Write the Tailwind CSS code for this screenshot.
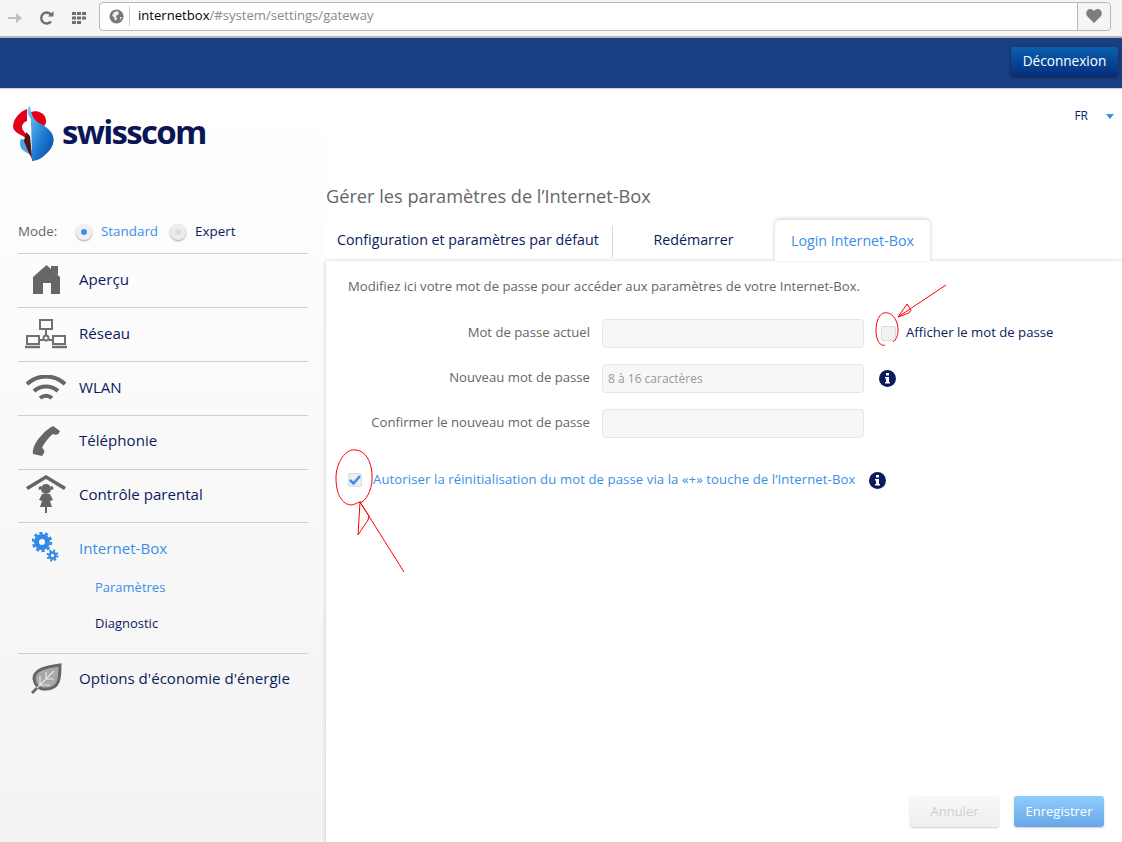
<!DOCTYPE html>
<html lang="fr">
<head>
    <meta charset="UTF-8">
    <meta name="viewport" content="width=device-width, initial-scale=1.0">
    <title>Internet-Box</title>
    <script src="https://cdn.jsdelivr.net/npm/@tailwindcss/browser@4"></script>
</head>
<body class="relative w-[1122px] h-[842px] overflow-hidden bg-white font-['Open_Sans','Noto_Sans',sans-serif] text-[#0b1a5c]">

    <!-- browser toolbar -->
    <div class="h-[38px] bg-[#f5f5f5] border-b-2 border-[#b5b5b5] flex items-center">
        <div class="w-[99px] flex items-center shrink-0 pl-[8px] gap-[18px]">
            <svg width="14" height="12" viewBox="0 0 14 12"><path d="M0 5h8V1l6 5-6 5V7H0z" fill="#c0c0c0"/></svg>
            <svg width="14" height="14" viewBox="0 0 14 14"><path d="M11 10.5A5.5 5.5 0 1 1 11 3.5" fill="none" stroke="#6e6e6e" stroke-width="2.4"/><path d="M8 5.5h5.5V0z" fill="#6e6e6e"/></svg>
            <svg width="14" height="12" viewBox="0 0 14 12" fill="#6e6e6e"><rect width="4" height="3"/><rect x="5" width="4" height="3"/><rect x="10" width="4" height="3"/><rect y="4.5" width="4" height="3"/><rect x="5" y="4.5" width="4" height="3"/><rect x="10" y="4.5" width="4" height="3"/><rect y="9" width="4" height="3"/><rect x="5" y="9" width="4" height="3"/></svg>
        </div>
        <div class="w-[1012px] h-[29px] mt-[-4px] bg-white border border-[#b8b8b8] rounded-[4px] flex items-center">
            <div class="w-[30px] h-[20px] border-r border-[#cfcfcf] flex items-center pl-[9px] shrink-0">
                <svg width="15" height="15" viewBox="0 0 15 15"><circle cx="7.5" cy="7.5" r="7" fill="#777"/><path d="M5 3l4-1 1 3-3 2 1 3-2 2-1-4-2-1zM11 8l2 0-2 3z" fill="#eee"/></svg>
            </div>
            <div class="pl-[8px] flex-1 text-[13.1px] text-[#8a8a8a]"><span class="text-black">internetbox</span>/#system/settings/gateway</div>
            <div class="w-[33px] h-full bg-[#f5f5f5] border-l border-[#b8b8b8] rounded-r-[4px] flex items-center justify-center">
                <svg width="16" height="14" viewBox="0 0 16 14"><path d="M8 14L1 7C-1 4 1 0 4.300 0 6 0 7.300 1 8 2 8.700 1 10 0 11.700 0 15 0 17 4 15 7z" fill="#7d7d7d"/></svg>
            </div>
        </div>
    </div>

    <!-- top band -->
    <div class="h-[51px] bg-[#1a3e82] border-b border-[#d0d0d0] flex items-center justify-end pr-[4px]">
        <button class="w-[107px] h-[29px] mt-[-3px] rounded-[3px] bg-linear-to-b from-[#0a60ae] to-[#062f7e] text-white text-[13.6px] shadow-[0_1px_3px_rgba(0,0,0,0.5)]">Déconnexion</button>
    </div>

    <div class="flex h-[753px]">
        <!-- sidebar -->
        <aside class="w-[326px] shrink-0 bg-linear-to-b from-white to-[#f3f3f3]">
            <div class="h-[128px] flex items-start pl-[13px] pt-[17px] gap-[7px]">
                <svg width="42" height="56" viewBox="0 0 42 56" class="shrink-0">
                    <defs>
                        <linearGradient id="swissBlue" x1="0" y1="0" x2="1" y2="1"><stop offset="0" stop-color="#7fd0f5"/><stop offset="0.55" stop-color="#1f7fd6"/><stop offset="1" stop-color="#0b3f9c"/></linearGradient>
                    </defs>
                    <path d="M14 3C8 5 1 11 0 20c0 4 3 6 6 8l11 6-3-4-4-6c-2-3-1-7 4-9z" fill="#e3001b"/>
                    <path d="M18 6c5-2 14 0 15 8 1 5-4 9-9 8l-6-2z" fill="#e3001b"/>
                    <path d="M17 0c-4 3-3 8 1 13l1 42c4 0 9-2 14-7 6-5 9-12 7-18-1-5-8-10-14-13-5-3-8-8-9-17z" fill="url(#swissBlue)"/>
                    <path d="M8 33c-2 4-1 10 3 12l8 5-2-16z" fill="#4aa5e4"/>
                    <path d="M13 26l4 4 2 23-4-8-4-10z" fill="#5a1010"/>
                </svg>
                <div class="text-[33px] leading-[44px] font-bold tracking-[-1.7px] mt-[4px] text-[#0a1656]">swisscom</div>
            </div>
            <div class="h-[37px] mx-[18px] pb-[7px] flex items-center text-[13.4px] border-b border-[#cfcfcf]">
                <span class="w-[58px] text-[#666]">Mode:</span>
                <span class="w-[16px] h-[16px] rounded-full bg-[#f0f0f0] shadow-[0_1px_2px_rgba(0,0,0,0.35)] flex items-center justify-center"><span class="w-[6px] h-[6px] rounded-full bg-[#3b8fe8]"></span></span>
                <span class="ml-[9px] w-[69px] text-[#3b8fe8]">Standard</span>
                <span class="w-[16px] h-[16px] rounded-full bg-[#ececec] shadow-[0_1px_2px_rgba(0,0,0,0.35)] flex items-center justify-center"><span class="w-[6px] h-[6px] rounded-full bg-[#dcdcdc]"></span></span>
                <span class="ml-[9px]">Expert</span>
            </div>
            <nav class="mx-[18px] text-[15.1px] font-medium">
                <a class="h-[54px] pb-[2px] flex items-center border-b border-[#cfcfcf]">
                    <span class="w-[61px] flex justify-center pr-[5px]">
                        <svg width="27" height="29" viewBox="0 0 27 29" fill="#666"><path d="M13.500 0L27 12V29H18V18H10V29H0V12L13.500 0zM18 1h7v9l-7-6z"/></svg>
                    </span>Aperçu
                </a>
                <a class="h-[54px] pb-[2px] flex items-center border-b border-[#cfcfcf]">
                    <span class="w-[61px] flex justify-center pr-[5px]">
                        <svg width="42" height="30" viewBox="0 0 42 30" fill="none" stroke="#707070" stroke-width="2"><rect x="15" y="1" width="12" height="9"/><rect x="2" y="17" width="12" height="8"/><rect x="28" y="17" width="12" height="8"/><path d="M21 10v6M14 21h4M24 21h4"/><circle cx="21" cy="19" r="2.500"/><path d="M0 28h15M27 28h15" stroke-width="2.500"/></svg>
                    </span>Réseau
                </a>
                <a class="h-[54px] pb-[2px] flex items-center border-b border-[#cfcfcf]">
                    <span class="w-[61px] flex justify-center pr-[5px]">
                        <svg width="40" height="26" viewBox="0 0 40 26" fill="none" stroke="#666" stroke-width="4"><path d="M1 9C12-1 28-1 39 9"/><path d="M8 16C15 10 25 10 32 16"/><path d="M14 23C18 20 22 20 26 23"/></svg>
                    </span>WLAN
                </a>
                <a class="h-[54px] pb-[4px] flex items-center border-b border-[#cfcfcf]">
                    <span class="w-[61px] flex justify-center pr-[5px]">
                        <svg width="30" height="30" viewBox="0 0 30 30" fill="#666"><path d="M22 0l7 5-1 2c-1 2-4 2-6 1-3 2-9 9-11 14 2 1 3 3 2 5l-2 3-9-2C1 24 4 16 10 10 14 5 18 2 22 0z"/></svg>
                    </span>Téléphonie
                </a>
                <a class="h-[53px] pb-[4px] flex items-center border-b border-[#cfcfcf]">
                    <span class="w-[61px] flex justify-center pr-[5px]">
                        <svg width="40" height="38" viewBox="0 0 40 38" fill="#666"><path d="M0 12L20 0l20 12-2 3L20 4 2 15z"/><circle cx="20" cy="14" r="5"/><path d="M15 11c-2 0-3 2-2 4l3-1zM25 11c2 0 3 2 2 4l-3-1z"/><path d="M16 19h8l3 6-3 1 2 6h-5v6h-2v-6h-5l2-6-3-1z"/></svg>
                    </span>Contrôle parental
                </a>
                <div class="h-[131px] border-b border-[#cfcfcf]">
                    <a class="h-[53px] pb-[2px] flex items-center text-[#3b8fe8]">
                        <span class="w-[61px] flex justify-center pr-[5px] mt-[-3px]">
                            <svg width="28" height="30" viewBox="0 0 28 30"><circle cx="10" cy="10" r="5.500" fill="none" stroke="#2f8be6" stroke-width="5"/><circle cx="10" cy="10" r="9" fill="none" stroke="#2f8be6" stroke-width="2.500" stroke-dasharray="3.200 2.450"/><circle cx="20.500" cy="23.500" r="3" fill="none" stroke="#2f8be6" stroke-width="2.500"/><circle cx="20.500" cy="23.500" r="5" fill="none" stroke="#2f8be6" stroke-width="2" stroke-dasharray="2 1.930"/></svg>
                        </span>Internet-Box
                    </a>
                    <div class="pl-[77px] text-[13px]">
                        <a class="block h-[36px] leading-[23px] text-[#3b8fe8]">Paramètres</a>
                        <a class="block h-[36px] leading-[23px]">Diagnostic</a>
                    </div>
                </div>
                <a class="h-[51px] pb-[2px] flex items-center">
                    <span class="w-[61px] flex justify-center pr-[5px]">
                        <svg width="32" height="32" viewBox="0 0 32 32"><path d="M30 2C30 14 30 26 16 26 9 27 5 22 4 16 4 7 14 4 30 2z" fill="#a8a8a8" stroke="#666" stroke-width="3"/><path d="M2 30L24 8M10 22V13M16 16V9M16 16h8M10 22h10" stroke="#e8e8e8" stroke-width="1.200" fill="none"/><path d="M1 29l5-5 2 2-5 5z" fill="#666"/></svg>
                    </span>Options d'économie d'énergie
                </a>
            </nav>
        </aside>

        <!-- main -->
        <main class="flex-1 flex flex-col">
            <div class="h-[131px]">
                <div class="h-[54px] flex items-center justify-end pr-[8px] text-[12px] font-medium">
                    FR
                    <svg class="ml-[18px]" width="8" height="5" viewBox="0 0 8 5"><path d="M0 0h8L4 5z" fill="#3b8fe8"/></svg>
                </div>
                <h1 class="mt-[40px] text-[18.2px] leading-[26px] text-[#666] font-normal">Gérer les paramètres de l’Internet-Box</h1>
            </div>
            <div class="h-[41px] flex items-end text-[14.25px] font-medium">
                <div class="pl-[11px] w-[287px] h-[32px] leading-[28px] border-r border-[#d8d8d8] mb-[3px] shrink-0">Configuration et paramètres par défaut</div>
                <div class="w-[161px] text-center h-[32px] leading-[28px] mb-[3px] shrink-0">Redémarrer</div>
                <div class="ml-[1px] w-[155px] h-[41px] leading-[41px] text-center text-[#3b8fe8] bg-white rounded-t-[5px] shadow-[0_-1px_4px_rgba(0,0,0,0.2)] relative z-10">Login Internet-Box</div>
            </div>
            <section class="flex-1 bg-white shadow-[0_0_4px_rgba(0,0,0,0.2)] relative flex flex-col text-[13.15px]">
                <p class="pl-[22px] pt-[16px] leading-[18px] text-[#666]">Modifiez ici votre mot de passe pour accéder aux paramètres de votre Internet-Box.</p>
                <div class="mt-[23px] flex items-center h-[30px]">
                    <label class="w-[264px] text-right text-[#666]">Mot de passe actuel</label>
                    <div class="ml-[12px] w-[262px] h-[29px] bg-[#f7f7f7] border border-[#e6e6e6] rounded-[4px]"></div>
                    <span class="ml-[17px] w-[15px] h-[15px] bg-[#f2f2f2] border border-[#dcdcdc] rounded-[2px]"></span>
                    <span class="ml-[10px] font-medium">Afficher le mot de passe</span>
                </div>
                <div class="mt-[15px] flex items-center h-[30px]">
                    <label class="w-[264px] text-right text-[#666]">Nouveau mot de passe</label>
                    <div class="ml-[12px] w-[262px] h-[29px] bg-[#f7f7f7] border border-[#e6e6e6] rounded-[4px] pl-[5px] leading-[27px] text-[12px] text-[#999]">8 à 16 caractères</div>
                    <svg class="ml-[15px]" width="17" height="17" viewBox="0 0 17 17"><circle cx="8.500" cy="8.500" r="8.500" fill="#0b1a5c"/><rect x="7" y="3" width="3" height="2.500" fill="#fff"/><path d="M6 7h4v5h1v1.500H6V12h1V8.500H6z" fill="#fff"/></svg>
                </div>
                <div class="mt-[15px] flex items-center h-[30px]">
                    <label class="w-[264px] text-right text-[#666]">Confirmer le nouveau mot de passe</label>
                    <div class="ml-[12px] w-[262px] h-[29px] bg-[#f7f7f7] border border-[#e6e6e6] rounded-[4px]"></div>
                </div>
                <div class="mt-[27px] pl-[22px] flex items-center h-[30px]">
                    <span class="w-[14px] h-[14px] bg-[#eeeeee] border border-[#dcdcdc] rounded-[2px] flex items-center justify-center shrink-0">
                        <svg width="12" height="10" viewBox="0 0 12 10"><path d="M1 5l3.500 3.500L11 1" fill="none" stroke="#3b8fe8" stroke-width="2.500"/></svg>
                    </span>
                    <span class="ml-[11px] text-[#3b8fe8] w-[487px] shrink-0 whitespace-nowrap tracking-[0.09px]">Autoriser la réinitialisation du mot de passe via la «+» touche de l’Internet-Box</span>
                    <svg class="ml-[9px]" width="17" height="17" viewBox="0 0 17 17"><circle cx="8.500" cy="8.500" r="8.500" fill="#0b1a5c"/><rect x="7" y="3" width="3" height="2.500" fill="#fff"/><path d="M6 7h4v5h1v1.500H6V12h1V8.500H6z" fill="#fff"/></svg>
                </div>
                <div class="mt-auto flex justify-end gap-[15px] pr-[18px] pb-[15px] text-[13px]">
                    <button class="w-[89px] h-[31px] rounded-[3px] bg-linear-to-b from-[#f8f8f8] to-[#eeeeee] text-[#cfcfcf] shadow-[0_1px_2px_rgba(0,0,0,0.2)]">Annuler</button>
                    <button class="w-[90px] h-[31px] rounded-[3px] bg-linear-to-b from-[#8fcdfb] to-[#69a6e8] text-white shadow-[0_1px_2px_rgba(0,0,0,0.2)]">Enregistrer</button>
                </div>
            </section>
        </main>
    </div>

    <!-- red marks drawn on the screenshot -->
    <svg class="absolute inset-0 pointer-events-none" width="1122" height="842" viewBox="0 0 1122 842" fill="none" stroke="#f00" stroke-width="1">
        <path d="M356 450C346 448 336 462 336 478 336 494 342 505 352 505 356 504 360 501 362 502 368 498 373 487 372 474 371 460 365 451 356 450z"/>
        <path d="M360 502L358 535 368 520 369 516 360 502L404 572"/>
        <path d="M888 313C880 311 876 320 876 331 876 341 881 347 885 345M888 313C893 314 898 321 898 330 898 336 896 340 893 342"/>
        <path d="M898 317L907 304 911 310 909 313 898 317L946 285"/>
    </svg>
</body>
</html>
